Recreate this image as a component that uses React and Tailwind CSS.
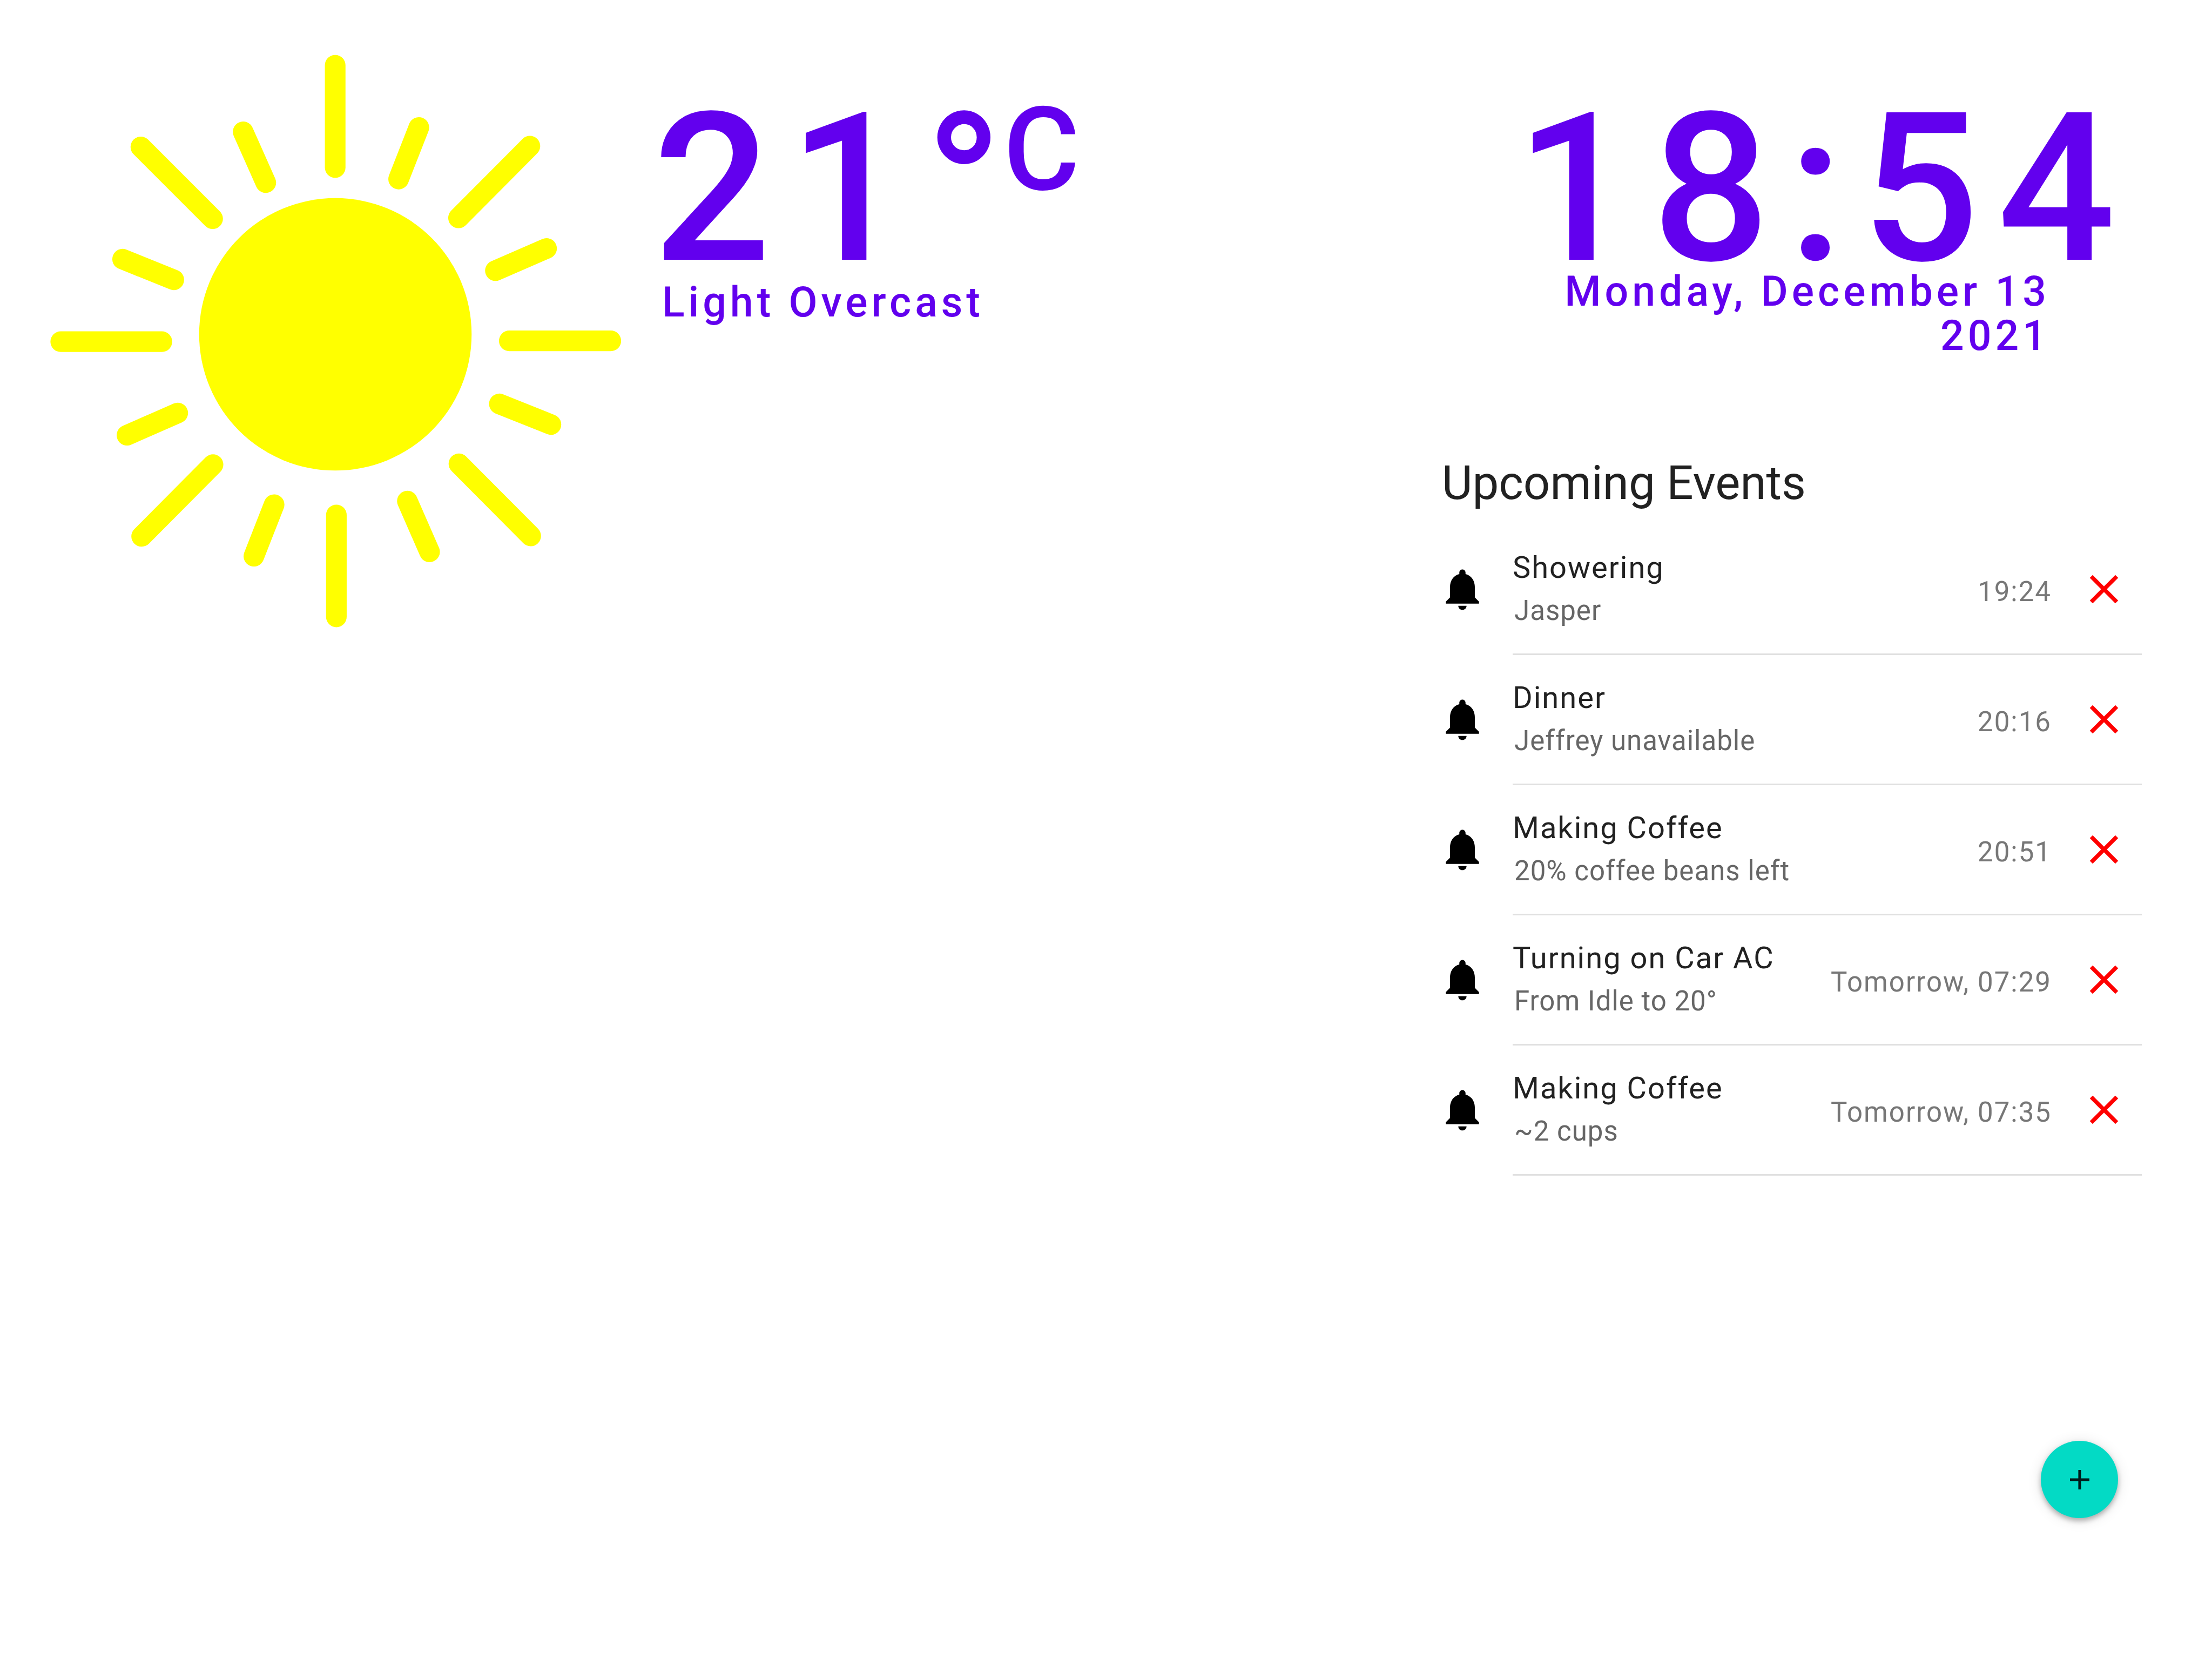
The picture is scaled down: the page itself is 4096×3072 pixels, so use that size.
const rays = [
  // long rays
  [758, 77, 758, 335],
  [761, 1211, 761, 1468],
  [66, 774, 321, 774],
  [1197, 772, 1453, 772],
  [268, 283, 449, 464],
  [1249, 281, 1069, 462],
  [450, 1084, 270, 1265],
  [1070, 1082, 1251, 1264],
  // short rays
  [526, 245, 583, 373],
  [969, 234, 918, 364],
  [1291, 539, 1162, 595],
  [222, 566, 351, 618],
  [361, 954, 233, 1010],
  [604, 1185, 553, 1315],
  [940, 1176, 996, 1304],
  [1172, 931, 1302, 983],
];

const events = [
  { id: 1, title: "Showering", detail: "Jasper", time: "19:24" },
  { id: 2, title: "Dinner", detail: "Jeffrey unavailable", time: "20:16" },
  { id: 3, title: "Making Coffee", detail: "20% coffee beans left", time: "20:51" },
  { id: 4, title: "Turning on Car AC", detail: "From Idle to 20°", time: "Tomorrow, 07:29" },
  { id: 5, title: "Making Coffee", detail: "~2 cups", time: "Tomorrow, 07:35" },
];

function SunIcon() {
  return (
    <svg viewBox="0 0 1536 1568" className="h-[1152px] w-[1128px] shrink-0" role="img" aria-label="Sun">
      <circle cx="758.5" cy="755.5" r="343.5" fill="#ffff00" />
      <g stroke="#ffff00" strokeWidth="52" strokeLinecap="round">
        {rays.map(([x1, y1, x2, y2]) => (
          <line key={`${x1}-${y1}`} x1={x1} y1={y1} x2={x2} y2={y2} />
        ))}
      </g>
    </svg>
  );
}

function BellIcon() {
  return (
    <svg viewBox="0 0 24 24" className="mb-1 size-[92px] shrink-0 fill-black" aria-hidden="true">
      <path d="M12 22c1.1 0 2-.9 2-2h-4c0 1.1.89 2 2 2zm6-6v-5c0-3.07-1.64-5.64-4.5-6.32V4c0-.83-.67-1.5-1.5-1.5s-1.5.67-1.5 1.5v.68C7.63 5.36 6 7.92 6 11v5l-2 2v1h16v-1l-2-2z" />
    </svg>
  );
}

function CloseIcon() {
  return (
    <svg viewBox="0 0 24 24" className="size-[90px] fill-[#ff0000]" aria-hidden="true">
      <path d="M19 6.41L17.59 5 12 10.59 6.41 5 5 6.41 10.59 12 5 17.59 6.41 19 12 13.41 17.59 19 19 17.59 13.41 12z" />
    </svg>
  );
}

function Weather() {
  return (
    <section className="flex items-start gap-[17px] pt-[64px] pl-[64px]" aria-label="Weather">
      <SunIcon />
      <div className="pt-[137px] font-medium text-[#6200ee]">
        <p className="text-[384px] leading-[298px] whitespace-nowrap">
          <span className="tracking-[33px]">21</span>°
          <span className="align-[130px] text-[216px] leading-[100px]">C</span>
        </p>
        <p className="mt-[20px] pl-[17px] text-[77px] leading-[82px] tracking-[7px]">Light Overcast</p>
      </div>
    </section>
  );
}

function Clock() {
  return (
    <header className="pt-[201px] text-right font-medium text-[#6200ee]">
      <time className="block pr-[15px] text-[384px] leading-[298px] tracking-[34px] whitespace-nowrap">18:54</time>
      <p className="pr-[170px] text-[77px] leading-[82px] tracking-[7px]">
        Monday, December 13
        <br />
        2021
      </p>
    </header>
  );
}

function EventRow({ title, detail, time }) {
  return (
    <li className="flex items-center gap-[47px]">
      <BellIcon />
      <div className="flex h-[241px] grow items-center border-b-[3px] border-[#e0e0e0] pr-[25px]">
        <div className="grow">
          <h3 className="text-[56px] leading-[64px] tracking-[2px] text-[#212121]">{title}</h3>
          <p className="mt-[16px] pl-[3px] text-[51px] leading-[64px] tracking-[1px] text-[#666666]">{detail}</p>
        </div>
        <span className="pt-[10px] text-[51px] leading-[64px] tracking-[2px] whitespace-nowrap text-[#777777]">
          {time}
        </span>
        <button type="button" aria-label={`Remove ${title}`} className="ml-[52px] shrink-0 cursor-pointer">
          <CloseIcon />
        </button>
      </div>
    </li>
  );
}

export default function App() {
  return (
    <main className="flex min-h-screen justify-between bg-white font-['Roboto',sans-serif]">
      <Weather />
      <div className="flex w-[1434px] shrink-0 flex-col pr-[130px] pb-[261px]">
        <Clock />
        <section className="mt-[181px]" aria-labelledby="events-heading">
          <h2 id="events-heading" className="pl-[8px] text-[87px] leading-[100px] text-[#212121]">
            Upcoming Events
          </h2>
          <ul className="mt-[28px]">
            {events.map((event) => (
              <EventRow key={event.id} {...event} />
            ))}
          </ul>
        </section>
        <button
          type="button"
          aria-label="Add event"
          className="mt-auto mr-[44px] flex size-[143px] cursor-pointer items-center justify-center self-end rounded-full bg-[#03dac5] shadow-[0_5px_10px_rgba(0,0,0,0.28),0_3px_26px_rgba(0,0,0,0.12)]"
        >
          <svg viewBox="0 0 14 14" className="size-[36px] fill-black/87" aria-hidden="true">
            <path d="M14 8H8v6H6V8H0V6h6V0h2v6h6v2z" />
          </svg>
        </button>
      </div>
    </main>
  );
}
